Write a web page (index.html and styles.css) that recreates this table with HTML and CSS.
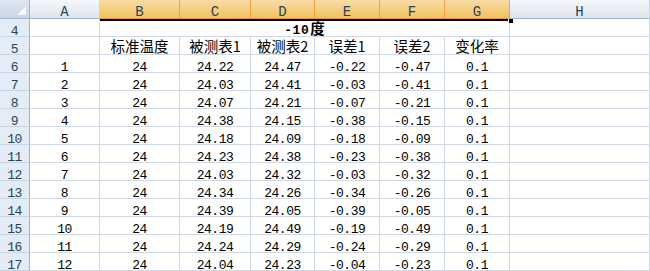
FILE: index.html
```html
<!DOCTYPE html>
<html>
<head>
<meta charset="utf-8">
<link rel="stylesheet" href="styles.css">
</head>
<body>
<div class="sheet">
  <div class="corner"><span class="tri"></span></div>
  <div class="ch">A</div>
  <div class="ch sel">B</div>
  <div class="ch sel">C</div>
  <div class="ch sel">D</div>
  <div class="ch sel">E</div>
  <div class="ch sel">F</div>
  <div class="ch sel">G</div>
  <div class="ch">H</div>

  <div class="rh">4</div><div class="c"></div><div class="c title"><span class="tt">-10<span class="zhin">度</span></span></div><div class="c"></div>

  <div class="rh">5</div><div class="c"></div>
  <div class="c zh">标准温度</div><div class="c zh">被测表1</div><div class="c zh">被测表2</div><div class="c zh">误差1</div><div class="c zh">误差2</div><div class="c zh">变化率</div><div class="c"></div>

  <div class="rh">6</div><div class="c">1</div><div class="c">24</div><div class="c">24.22</div><div class="c">24.47</div><div class="c">-0.22</div><div class="c">-0.47</div><div class="c">0.1</div><div class="c"></div>
  <div class="rh">7</div><div class="c">2</div><div class="c">24</div><div class="c">24.03</div><div class="c">24.41</div><div class="c">-0.03</div><div class="c">-0.41</div><div class="c">0.1</div><div class="c"></div>
  <div class="rh">8</div><div class="c">3</div><div class="c">24</div><div class="c">24.07</div><div class="c">24.21</div><div class="c">-0.07</div><div class="c">-0.21</div><div class="c">0.1</div><div class="c"></div>
  <div class="rh">9</div><div class="c">4</div><div class="c">24</div><div class="c">24.38</div><div class="c">24.15</div><div class="c">-0.38</div><div class="c">-0.15</div><div class="c">0.1</div><div class="c"></div>
  <div class="rh">10</div><div class="c">5</div><div class="c">24</div><div class="c">24.18</div><div class="c">24.09</div><div class="c">-0.18</div><div class="c">-0.09</div><div class="c">0.1</div><div class="c"></div>
  <div class="rh">11</div><div class="c">6</div><div class="c">24</div><div class="c">24.23</div><div class="c">24.38</div><div class="c">-0.23</div><div class="c">-0.38</div><div class="c">0.1</div><div class="c"></div>
  <div class="rh">12</div><div class="c">7</div><div class="c">24</div><div class="c">24.03</div><div class="c">24.32</div><div class="c">-0.03</div><div class="c">-0.32</div><div class="c">0.1</div><div class="c"></div>
  <div class="rh">13</div><div class="c">8</div><div class="c">24</div><div class="c">24.34</div><div class="c">24.26</div><div class="c">-0.34</div><div class="c">-0.26</div><div class="c">0.1</div><div class="c"></div>
  <div class="rh">14</div><div class="c">9</div><div class="c">24</div><div class="c">24.39</div><div class="c">24.05</div><div class="c">-0.39</div><div class="c">-0.05</div><div class="c">0.1</div><div class="c"></div>
  <div class="rh">15</div><div class="c">10</div><div class="c">24</div><div class="c">24.19</div><div class="c">24.49</div><div class="c">-0.19</div><div class="c">-0.49</div><div class="c">0.1</div><div class="c"></div>
  <div class="rh">16</div><div class="c">11</div><div class="c">24</div><div class="c">24.24</div><div class="c">24.29</div><div class="c">-0.24</div><div class="c">-0.29</div><div class="c">0.1</div><div class="c"></div>
  <div class="rh">17</div><div class="c">12</div><div class="c">24</div><div class="c">24.04</div><div class="c">24.23</div><div class="c">-0.04</div><div class="c">-0.23</div><div class="c">0.1</div><div class="c"></div>

  <div class="selline"></div>
  <div class="handle"></div>
</div>
</body>
</html>
```

FILE: styles.css
```css
html, body {
  margin: 0;
  padding: 0;
  background: #fff;
  overflow: hidden;
}

.sheet {
  position: relative;
  display: grid;
  grid-template-columns: 30px 70px 80px 71px 64px 65px 65px 65px 140px;
  grid-template-rows: 19px repeat(14, 18px);
  width: 650px;
  height: 271px;
  overflow: hidden;
  font-family: "Liberation Mono", monospace;
}

.sheet > div {
  box-sizing: border-box;
}

.corner {
  position: relative;
  background: linear-gradient(#dfe7f1, #c9d6e6);
  border-right: 1px solid #9eb6ce;
  border-bottom: 1px solid #9eb6ce;
}

.tri {
  position: absolute;
  right: 3px;
  bottom: 3px;
  width: 0;
  height: 0;
  border-left: 9px solid transparent;
  border-bottom: 9px solid #f4f7fb;
}

.ch {
  display: flex;
  justify-content: center;
  align-items: flex-end;
  background: linear-gradient(#f5f8fb, #dde5ee);
  border-right: 1px solid #c9d4e0;
  border-bottom: 1px solid #9eb6ce;
  color: #2a4356;
  font-size: 14px;
  line-height: 10px;
  padding-bottom: 1px;
}

.ch.sel {
  background: linear-gradient(#f9dca6, #f1c15f);
  border-right: 1px solid #f0a040;
  border-bottom: 1px solid #f29536;
}

.rh {
  display: flex;
  justify-content: center;
  align-items: flex-end;
  background: #e4ecf7;
  border-right: 1px solid #9eb6ce;
  border-bottom: 1px solid #c5d3e3;
  color: #2a4356;
  font-size: 13px;
  letter-spacing: -0.5px;
  line-height: 9px;
}

.c {
  display: flex;
  justify-content: center;
  align-items: flex-end;
  border-right: 1px solid #d0d7e5;
  border-bottom: 1px solid #d0d7e5;
  color: #000;
  font-size: 13px;
  letter-spacing: -0.5px;
  line-height: 9px;
  white-space: nowrap;
}

.zh {
  font-family: "Noto Sans CJK SC", sans-serif;
  font-size: 14.5px;
  letter-spacing: 0;
  line-height: 14px;
  padding-bottom: 1.5px;
}

.title {
  grid-column: span 6;
  font-weight: bold;
  padding-bottom: 1px;
}

.tt {
  line-height: 9px;
  letter-spacing: 0.5px;
}

.zhin {
  font-family: "Noto Sans CJK SC", sans-serif;
  font-size: 14.5px;
  line-height: 0;
  letter-spacing: 0;
  margin-left: 1px;
}

.selline {
  position: absolute;
  left: 100px;
  top: 19px;
  width: 410px;
  height: 2px;
  background: #000;
}

.handle {
  position: absolute;
  left: 508px;
  top: 19px;
  width: 5px;
  height: 4px;
  background: #000;
  border-left: 1px solid #fff;
}
```
